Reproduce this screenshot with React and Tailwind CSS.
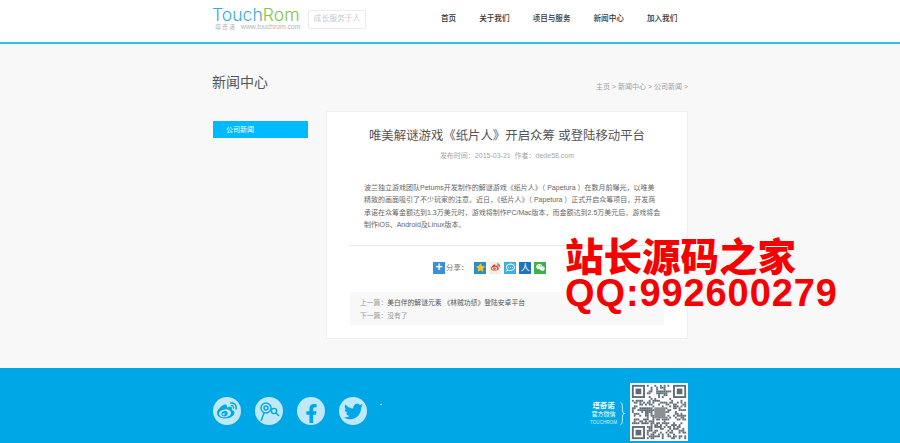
import React from 'react';
import { FaWeibo, FaFacebookF, FaTwitter, FaWeixin, FaStar, FaRegCommentDots } from 'react-icons/fa';

const navItems = ['首页', '关于我们', '项目与服务', '新闻中心', '加入我们'];

const bodyLines = [
  '波兰独立游戏团队Petums开发制作的解谜游戏《纸片人》（ Papetura ）在数月前曝光，以唯美',
  '精致的画面吸引了不少玩家的注意。近日，《纸片人》（ Papetura ）正式开启众筹项目，开发商',
  '承诺在众筹金额达到1.3万美元时，游戏将制作PC/Mac版本，而金额达到2.5万美元后，游戏将会',
  '制作iOS、Android及Linux版本。',
];

const QrCode = () => {
  const n = 29;
  const cells = [];
  for (let y = 0; y < n; y++) {
    for (let x = 0; x < n; x++) {
      const h = Math.sin(x * 12.9898 + y * 78.233) * 43758.5453;
      const rnd = h - Math.floor(h);
      const inFinder = (x < 8 && y < 8) || (x > 20 && y < 8) || (x < 8 && y > 20);
      const inCenter = x > 11 && x < 18 && y > 11 && y < 18;
      if (!inFinder && !inCenter && rnd < 0.5) cells.push([x, y]);
    }
  }
  const finder = [[0, 0], [22, 0], [0, 22]];
  return (
    <svg width="58" height="58" viewBox="-1 -1 31 31" className="bg-white">
      {cells.map(([x, y]) => <rect key={x + '-' + y} x={x} y={y} width="1" height="1" fill="#5f6b75" />)}
      {finder.map(([x, y]) => (
        <g key={x + '-' + y}>
          <rect x={x + 0.5} y={y + 0.5} width="6" height="6" fill="none" stroke="#5f6b75" />
          <rect x={x + 2} y={y + 2} width="3" height="3" fill="#5f6b75" />
        </g>
      ))}
      <rect x="12" y="12" width="6" height="6" fill="#8a9096" />
    </svg>
  );
};

const SocialIcon = ({ children }) => (
  <div className="w-[28px] h-[28px] rounded-full bg-[#bfe8fb] flex items-center justify-center text-[#00a7e6] overflow-hidden">
    {children}
  </div>
);

const ShareIcon = ({ bg, children }) => (
  <span className={`w-[12px] h-[12px] flex items-center justify-center text-white text-[9px] ${bg}`}>{children}</span>
);

export default function App() {
  return (
    <div className="relative w-[900px] h-[443px] overflow-hidden flex flex-col bg-[#f8f8f8] font-['Liberation_Sans','Noto_Sans_CJK_SC',sans-serif]">
      <header className="h-[44px] shrink-0 bg-white flex flex-col">
        <div className="w-[476px] ml-[212px] flex items-center h-[42px] pb-[4px]">
          <div className="w-[90px] flex flex-col">
            <div className="text-[17.6px] leading-[14px] font-['Inter','Noto_Sans',sans-serif] font-light whitespace-nowrap">
              <span className="text-[#35a9dc]">Touch</span><span className="text-[#82c341]">Rom</span>
            </div>
            <div className="mt-[2px] text-[6.8px] leading-[6px] text-[#b5b5b5] flex gap-[5px] ml-[3px] whitespace-nowrap">
              <span className="text-[6px] tracking-[1px]">塔奇诺</span><span>www.touchrom.com</span>
            </div>
          </div>
          <div className="ml-[6px] w-[58px] h-[19px] border border-[#ececec] rounded-[2px] text-[#c8c8c8] text-[7.8px] flex items-center justify-center whitespace-nowrap">
            成长服务于人
          </div>
          <nav className="ml-[75px] flex gap-[23px] text-[7.6px] font-medium text-[#333] whitespace-nowrap">
            {navItems.map((item) => <span key={item}>{item}</span>)}
          </nav>
        </div>
        <div className="h-[2px] bg-[#2fc0ee]" />
      </header>

      <main className="flex-1 w-[476px] ml-[212px] flex flex-col">
        <div className="flex items-end justify-between h-[54px] pb-[6px]">
          <h1 className="text-[14px] leading-[20px] font-normal text-[#555]">新闻中心</h1>
          <div className="text-[7px] text-[#a0a0a0] whitespace-nowrap">主页 &gt; 新闻中心 &gt; 公司新闻 &gt;</div>
        </div>
        <div className="flex mt-[13px]">
          <aside className="w-[114px] shrink-0 pt-[10px]">
            <div className="w-[95px] ml-[1px] h-[17px] bg-[#00baff] text-white text-[7px] leading-[17px] pl-[13px]">公司新闻</div>
          </aside>
          <article className="w-[362px] h-[228px] bg-white border border-[#f0f0f0] pt-[14px] px-[23px]">
            <h2 className="text-[12.4px] leading-[20px] font-normal text-[#555] text-center whitespace-nowrap">唯美解谜游戏《纸片人》开启众筹 或登陆移动平台</h2>
            <div className="mt-[5px] text-[7px] leading-[10px] text-[#a5a5a5] text-center whitespace-nowrap">发布时间：2015-03-21&nbsp;&nbsp;作者：dede58.com</div>
            <div className="mt-[21px] ml-[14px] text-[7px] leading-[12.4px] text-[#666] whitespace-nowrap">
              {bodyLines.map((line) => <p key={line}>{line}</p>)}
            </div>
            <div className="mt-[13px] h-px bg-[#e6e6e6]" />
            <div className="mt-[16px] ml-[83px] flex items-center gap-[3px] text-[#777] text-[7.4px] leading-[12px]">
              <span className="w-[12px] h-[12px] bg-[#3f8fd8] text-white text-[12px] leading-[11px] text-center font-bold">+</span>
              <span className="-ml-[2px] mr-[3px]">分享：</span>
              <ShareIcon bg="bg-[#2a8fc4]"><FaStar className="text-[#f6c22b]" /></ShareIcon>
              <ShareIcon bg="bg-[#f4ede3]"><FaWeibo className="text-[#d8332a]" /></ShareIcon>
              <ShareIcon bg="bg-[#3ab0e2]"><FaRegCommentDots /></ShareIcon>
              <ShareIcon bg="bg-[#1f72c4]">人</ShareIcon>
              <ShareIcon bg="bg-[#3fb14a]"><FaWeixin /></ShareIcon>
            </div>
            <div className="mt-[18px] h-[33px] bg-[#f8f8f8] px-[10px] pt-[4px] text-[6.8px] leading-[13px] text-[#999] whitespace-nowrap">
              <div>上一篇：<span className="text-[#555]">美白伴的解谜元素 《林贼功绩》登陆安卓平台</span></div>
              <div>下一篇：没有了</div>
            </div>
          </article>
        </div>
      </main>

      <footer className="h-[75px] shrink-0 bg-[#00a7e6] pt-[15px]">
        <div className="w-[476px] ml-[212px] h-[58px] flex items-center">
          <div className="flex gap-[14px] ml-[1px] mb-[2px]">
            <SocialIcon><FaWeibo size={20} /></SocialIcon>
            <SocialIcon>
              <svg width="24" height="24" viewBox="0 0 24 24" fill="none" stroke="#00a7e6" strokeWidth="1.4">
                <circle cx="9" cy="9" r="5" />
                <circle cx="9" cy="9" r="2" />
                <path d="M7 14 L4 22" />
                <circle cx="17" cy="12" r="2.6" />
                <path d="M19 14 L22 17" />
              </svg>
            </SocialIcon>
            <SocialIcon><FaFacebookF size={19} className="mt-[5px] ml-[1px]" /></SocialIcon>
            <SocialIcon><FaTwitter size={19} /></SocialIcon>
          </div>
          <span className="ml-[13px] mb-[16px] w-[2px] h-px bg-[#bfe8fb]" />
          <div className="ml-auto flex items-center gap-[3px]">
            <div className="flex flex-col items-center text-white whitespace-nowrap mt-[3px]">
              <span className="text-[7.4px] leading-[9px] font-bold">塔奇诺</span>
              <span className="text-[6px] leading-[9px]">官方微信</span>
              <span className="text-[4.6px] leading-[8px] text-[#d5f1fc]">TOUCHROM</span>
            </div>
            <svg width="5" height="23" viewBox="0 0 5 23" fill="none" stroke="#fff" strokeWidth="0.8" className="mr-[2px] mt-[3px]">
              <path d="M0.5 0.5 C3 1 2 5 2.5 9 C2.8 10.5 3.5 11.5 4.5 11.5 C3.5 11.5 2.8 12.5 2.5 14 C2 18 3 22 0.5 22.5" />
            </svg>
            <QrCode />
          </div>
        </div>
      </footer>

      <div className="absolute left-[565px] top-[234px] text-[#f60000] font-['Noto_Sans_CJK_SC',sans-serif] font-black text-[38.5px] leading-[40px] whitespace-nowrap">
        站长源码之家
      </div>
      <div className="absolute left-[565px] top-[274px] text-[#f60000] font-['Liberation_Sans',sans-serif] font-bold text-[38px] leading-[38px] tracking-[0.9px] whitespace-nowrap">
        QQ:992600279
      </div>
    </div>
  );
}
